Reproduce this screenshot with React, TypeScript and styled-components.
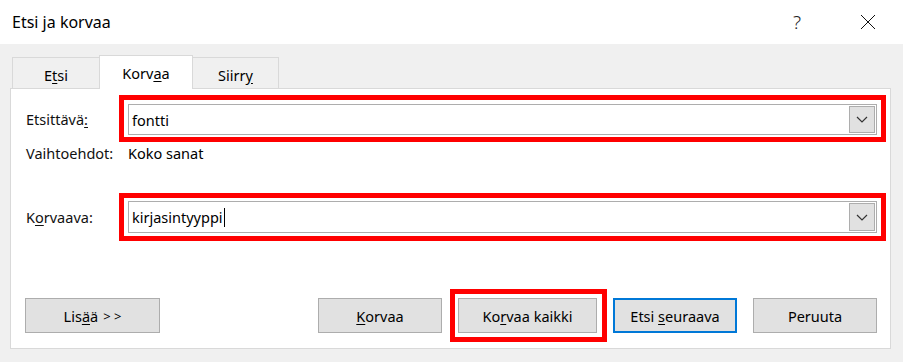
import React from 'react'
import styled, {createGlobalStyle} from 'styled-components'

const GlobalStyle = createGlobalStyle`
  body {
    margin: 0;
    background: #f0f0f0;
    font-family: "Noto Sans", "Open Sans", sans-serif;
    color: #000;
  }
`

const Dialog = styled.div`
  width: 903px;
  height: 362px;
  background: #f0f0f0;
  display: flex;
  flex-direction: column;
  overflow: hidden;
`

const TitleBar = styled.div`
  height: 44px;
  background: #fff;
  display: flex;
  align-items: center;
  padding-left: 12px;
`

const Title = styled.div`
  flex: 1;
  font-size: 16px;
  padding-bottom: 1px;
`

const HelpMark = styled.div`
  font-size: 19px;
  width: 18px;
  text-align: center;
  color: #222;
  margin-right: 54px;
  font-weight: 300;
`

const CloseBox = styled.div`
  width: 16px;
  height: 16px;
  margin-right: 27px;
  display: flex;
`

const Body = styled.div`
  flex: 1;
  padding: 11px 12px 13px 10px;
  display: flex;
  flex-direction: column;
`

const TabStrip = styled.div`
  display: flex;
  align-items: flex-end;
  margin-left: 2px;
  height: 33px;
`

const Tab = styled.div<{$active?: boolean; $w: number}>`
  width: ${(p) => p.$w}px;
  box-sizing: border-box;
  height: ${(p) => (p.$active ? 34 : 31)}px;
  margin-bottom: ${(p) => (p.$active ? -1 : 0)}px;
  margin-left: -1px;
  &:first-child {
    margin-left: 0;
  }
  border: 1px solid #d9d9d9;
  border-bottom: none;
  background: ${(p) => (p.$active ? '#fff' : '#f0f0f0')};
  position: relative;
  z-index: ${(p) => (p.$active ? 1 : 0)};
  display: flex;
  justify-content: center;
  align-items: center;
  padding-top: ${(p) => (p.$active ? 0 : 3)}px;
  font-size: 14.5px;
`

const Panel = styled.div`
  flex: 1;
  background: #fff;
  border: 1px solid #d9d9d9;
  display: flex;
  flex-direction: column;
  padding: 6px 4px 15px 14px;
`

const FieldRow = styled.div`
  display: flex;
  align-items: center;
`

const Label = styled.div`
  width: 94px;
  padding-left: 1px;
  box-sizing: border-box;
  font-size: 14.5px;
  color: #111;
`

const Highlight = styled.div<{$pad: string}>`
  border: 5px solid #ff0000;
  padding: ${(p) => p.$pad};
  background: #fff;
  display: flex;
`

const FieldHighlight = styled(Highlight)`
  flex: 1;
`

const ButtonHighlight = styled(Highlight)`
  margin: -9px -10px -9px -8px;
`

const Combo = styled.div<{$h: number}>`
  flex: 1;
  height: ${(p) => p.$h}px;
  box-sizing: border-box;
  border: 1px solid #adadad;
  display: flex;
  align-items: center;
  padding: 1px;
`

const ComboText = styled.div`
  flex: 1;
  padding-left: 2px;
  font-size: 14.5px;
  display: flex;
  align-items: center;
`

const Caret = styled.span`
  display: inline-block;
  width: 1px;
  height: 19px;
  background: #000;
  margin-left: 1px;
`

const DropButton = styled.div`
  width: 26px;
  align-self: stretch;
  box-sizing: border-box;
  background: #e1e1e1;
  border: 1px solid #adadad;
  display: flex;
  align-items: center;
  justify-content: center;
`

const OptionsRow = styled.div`
  display: flex;
  align-items: center;
  height: 20px;
  margin: 1px 0 30px;
`

const OptionsValue = styled.div`
  padding-left: 9px;
  font-size: 14.5px;
`

const ButtonRow = styled.div`
  margin-top: auto;
  display: flex;
  align-items: center;
  padding-right: 9px;
`

const RightButtons = styled.div`
  margin-left: auto;
  display: flex;
  align-items: center;
  gap: 16px;
`

const Button = styled.div<{$w: number; $default?: boolean}>`
  width: ${(p) => p.$w}px;
  height: 35px;
  box-sizing: border-box;
  background: #e1e1e1;
  border: ${(p) => (p.$default ? '2px solid #0078d7' : '1px solid #adadad')};
  display: flex;
  align-items: center;
  justify-content: center;
  font-size: 14.5px;
  white-space: pre;
`

const Arrows = styled.span`
  font-size: 13px;
  margin-left: 5px;
  padding-top: 1px;
`

const U = styled.span`
  text-decoration: underline;
  text-underline-offset: 2px;
`

const Chevron = () => (
  <svg width="12" height="7" viewBox="0 0 12 7">
    <polyline points="1,1 6,6 11,1" fill="none" stroke="#333" strokeWidth="1.2" />
  </svg>
)

const CloseIcon = () => (
  <svg width="16" height="16" viewBox="0 0 16 16">
    <path d="M1 1 L15 15 M15 1 L1 15" stroke="#111" strokeWidth="1" fill="none" />
  </svg>
)

const App: React.FC = () => {
  return (
    <Dialog>
      <GlobalStyle />
      <TitleBar>
        <Title>Etsi ja korvaa</Title>
        <HelpMark>?</HelpMark>
        <CloseBox>
          <CloseIcon />
        </CloseBox>
      </TitleBar>
      <Body>
        <TabStrip>
          <Tab $w={88}>E<U>t</U>si</Tab>
          <Tab $w={94} $active>Korv<U>a</U>a</Tab>
          <Tab $w={87}>Siirr<U>y</U></Tab>
        </TabStrip>
        <Panel>
          <FieldRow>
            <Label>Etsittävä<U>:</U></Label>
            <FieldHighlight $pad="4px 4px 2px 4px">
              <Combo $h={31}>
                <ComboText>fontti</ComboText>
                <DropButton>
                  <Chevron />
                </DropButton>
              </Combo>
            </FieldHighlight>
          </FieldRow>
          <OptionsRow>
            <Label>Vaihtoehdot:</Label>
            <OptionsValue>Koko sanat</OptionsValue>
          </OptionsRow>
          <FieldRow>
            <Label>K<U>o</U>rvaava:</Label>
            <FieldHighlight $pad="3px 4px">
              <Combo $h={32}>
                <ComboText>
                  kirjasintyyppi<Caret />
                </ComboText>
                <DropButton>
                  <Chevron />
                </DropButton>
              </Combo>
            </FieldHighlight>
          </FieldRow>
          <ButtonRow>
            <Button $w={135}>
              Lis<U>ä</U>ä<Arrows>&gt; &gt;</Arrows>
            </Button>
            <RightButtons>
              <Button $w={124}>
                <U>K</U>orvaa
              </Button>
              <ButtonHighlight $pad="4px 5px 4px 3px">
                <Button $w={139}>
                  Ko<U>r</U>vaa kaikki
                </Button>
              </ButtonHighlight>
              <Button $w={124} $default>
                Etsi <U>s</U>euraava
              </Button>
              <Button $w={124}>Peruuta</Button>
            </RightButtons>
          </ButtonRow>
        </Panel>
      </Body>
    </Dialog>
  )
}

export default App
